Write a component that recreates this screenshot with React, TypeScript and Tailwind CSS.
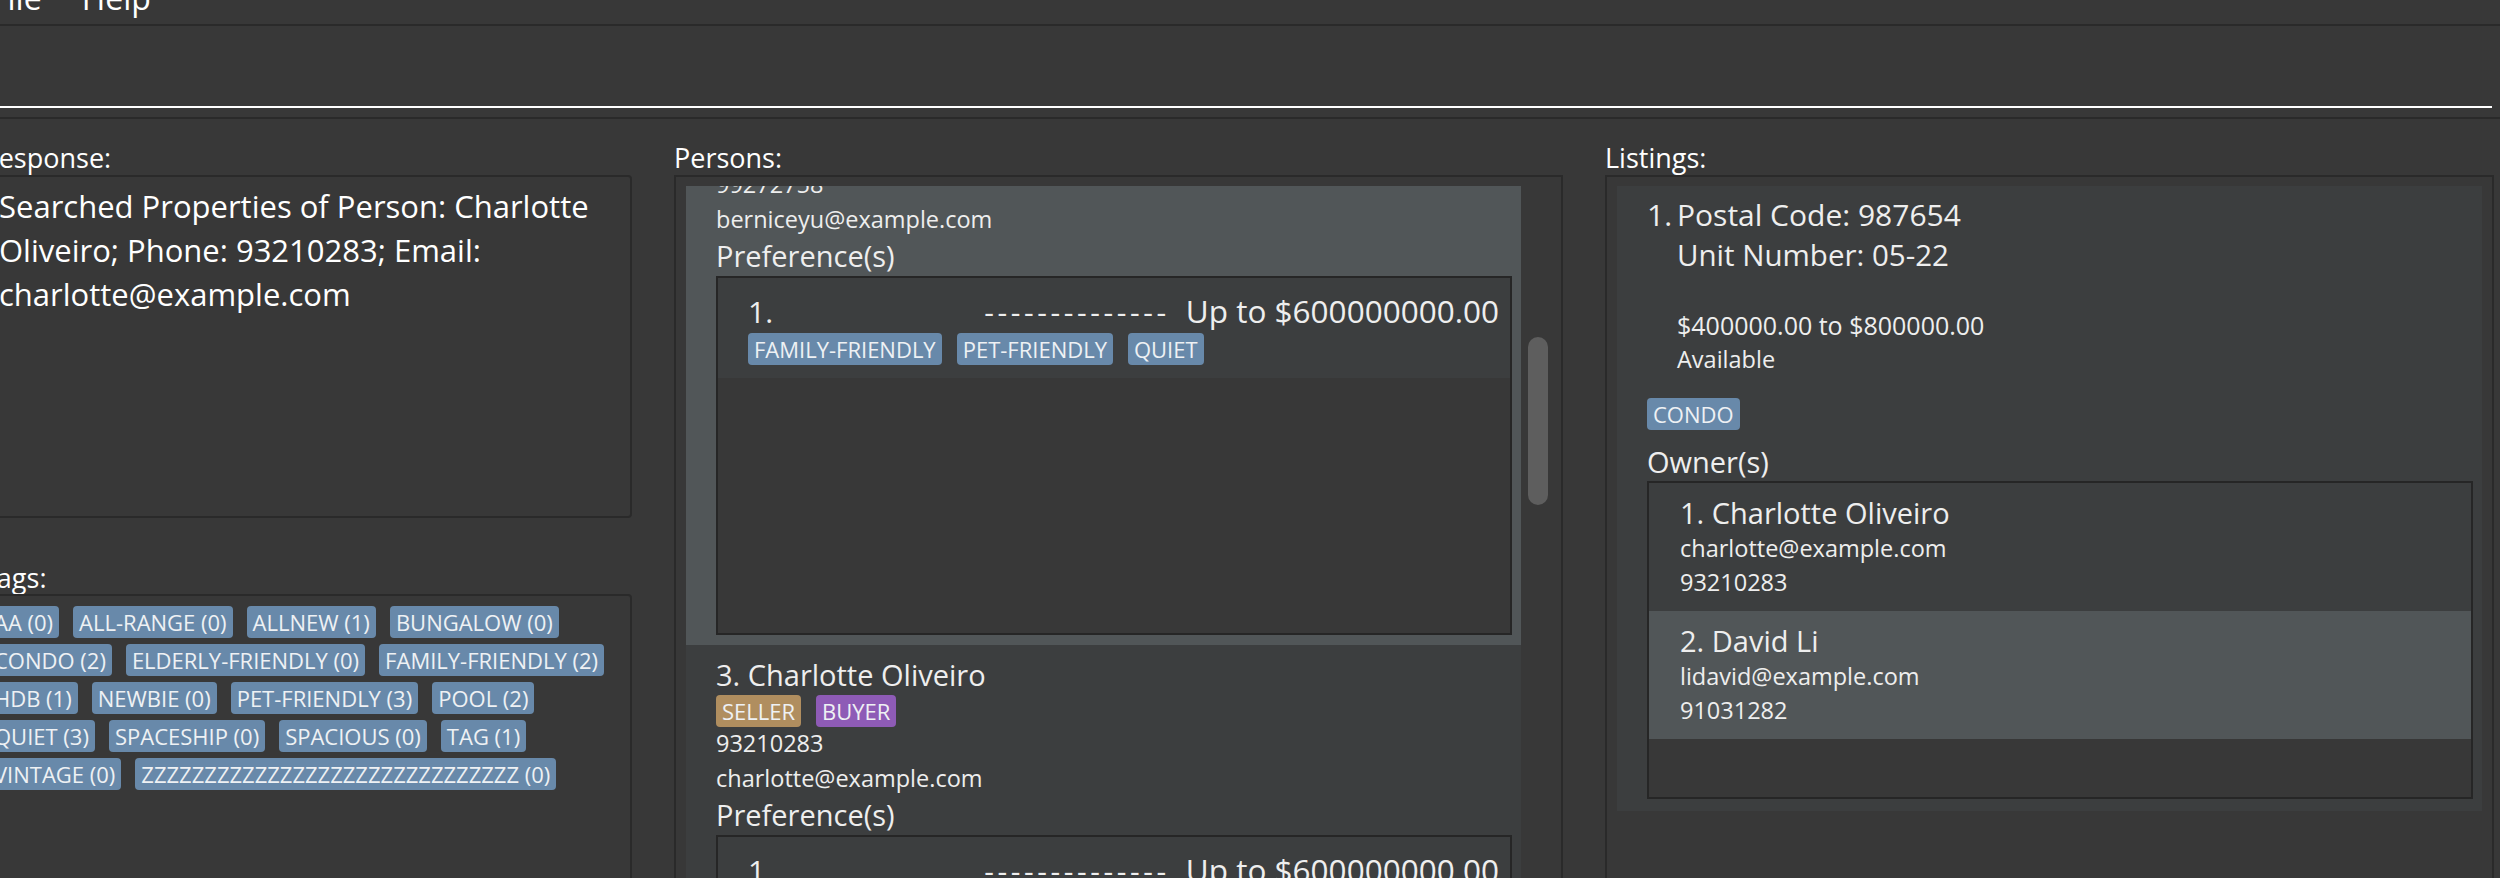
import React from 'react';

type Role = 'SELLER' | 'BUYER';

const tagsInUse = [
  'AA (0)',
  'ALL-RANGE (0)',
  'ALLNEW (1)',
  'BUNGALOW (0)',
  'CONDO (2)',
  'ELDERLY-FRIENDLY (0)',
  'FAMILY-FRIENDLY (2)',
  'HDB (1)',
  'NEWBIE (0)',
  'PET-FRIENDLY (3)',
  'POOL (2)',
  'QUIET (3)',
  'SPACESHIP (0)',
  'SPACIOUS (0)',
  'TAG (1)',
  'VINTAGE (0)',
  'ZZZZZZZZZZZZZZZZZZZZZZZZZZZZZZ (0)',
];

// list is scrolled: card 2 is only partly in view (from its phone line down)
const persons = [
  {
    index: 2,
    name: 'Bernice Yu',
    roles: ['BUYER'] as Role[],
    phone: '99272758',
    email: 'berniceyu@example.com',
    bg: 'bg-[#515658]',
    scrolledPast: true,
  },
  {
    index: 3,
    name: 'Charlotte Oliveiro',
    roles: ['SELLER', 'BUYER'] as Role[],
    phone: '93210283',
    email: 'charlotte@example.com',
    bg: 'bg-[#3c3e3f]',
    scrolledPast: false,
  },
];

const owners = [
  { name: 'Charlotte Oliveiro', email: 'charlotte@example.com', phone: '93210283', bg: 'bg-[#3c3e3f]' },
  { name: 'David Li', email: 'lidavid@example.com', phone: '91031282', bg: 'bg-[#515658]' },
];

function Tag({ label, color = 'bg-[#6889aa]' }: { label: string; color?: string }) {
  return (
    <span
      className={`${color} h-[32px] px-[6px] rounded-[4px] flex items-center text-[22px] leading-none text-[#eef1f4] whitespace-nowrap`}
    >
      {label}
    </span>
  );
}

function RoleTag({ role }: { role: Role }) {
  return role === 'SELLER' ? (
    <Tag label="SELLER" color="bg-[#b08e5f]" />
  ) : (
    <Tag label="BUYER" color="bg-[#8e5bb6]" />
  );
}

function PanelLabel({ children }: { children: React.ReactNode }) {
  return <div className="text-[27px] leading-[32px] text-white mb-[1px]">{children}</div>;
}

function PreferenceBox() {
  return (
    <div className="h-[359px] border-2 border-[#262626] bg-[#383838] mt-[2px]">
      <div className="bg-[#3c3e3f] pl-[30px] pr-[11px] pt-[13px] pb-[13px]">
        <div className="flex justify-between items-baseline text-[30px] leading-[40px]">
          <span>1.</span>
          <span className="flex items-baseline gap-[16px]">
            <span className="tracking-[3.6px]">--------------</span>
            <span className="text-[31.5px]">Up to $600000000.00</span>
          </span>
        </div>
        <div className="flex gap-[15px] mt-[1px]">
          <Tag label="FAMILY-FRIENDLY" />
          <Tag label="PET-FRIENDLY" />
          <Tag label="QUIET" />
        </div>
      </div>
    </div>
  );
}

function PersonCard({ p }: { p: (typeof persons)[number] }) {
  return (
    <div className={`${p.bg} pl-[30px] pr-[9px] ${p.scrolledPast ? 'pt-0' : 'pt-[12px]'} pb-[10px] text-[#eeeeee]`}>
      {!p.scrolledPast && (
        <>
          <div className="text-[29px] leading-[36px]">
            {p.index}. {p.name}
          </div>
          <div className="flex gap-[15px] mt-[2px]">
            {p.roles.map(r => (
              <RoleTag key={r} role={r} />
            ))}
          </div>
        </>
      )}
      <div className="text-[23.5px] leading-[32px]">{p.phone}</div>
      <div className="text-[23.5px] leading-[38px]">{p.email}</div>
      <div className="text-[29px] leading-[36px]">Preference(s)</div>
      <PreferenceBox />
    </div>
  );
}

function OwnerRow({ o, i }: { o: (typeof owners)[number]; i: number }) {
  return (
    <div className={`${o.bg} h-[128px] pl-[31px] pt-[12px]`}>
      <div className="text-[29px] leading-[36px]">
        {i}. {o.name}
      </div>
      <div className="text-[23.5px] leading-[34px]">{o.email}</div>
      <div className="text-[23.5px] leading-[34px]">{o.phone}</div>
    </div>
  );
}

export default function App() {
  return (
    <div className="w-[2500px] h-[878px] overflow-hidden bg-[#383838] text-white font-['Open_Sans',sans-serif]">
      {/* Menu bar */}
      <div className="h-[26px] border-b-2 border-[#2a2a2a] overflow-hidden">
        <div className="flex gap-[40px] -ml-[9px] -mt-[18px]">
          <span className="text-[32px] leading-[32px]">File</span>
          <span className="text-[32px] leading-[32px]">Help</span>
        </div>
      </div>

      {/* Command box */}
      <div className="h-[93px] border-b-2 border-[#2a2a2a] pr-[8px]">
        <div className="h-[82px] border-b-2 border-white" />
      </div>

      {/* Main panels */}
      <div className="flex gap-[42px] -ml-[18px] pt-[23px]">
        <div className="w-[650px] shrink-0 flex flex-col">
          <PanelLabel>Response:</PanelLabel>
          <div className="h-[343px] border-2 border-[#2a2a2a] rounded-[4px] pl-[15px] pr-[20px] pt-[7px] text-[31px] leading-[44px] text-white">
            Searched Properties of Person: Charlotte Oliveiro; Phone: 93210283; Email: charlotte@example.com
          </div>
          <div className="mt-[44px] text-[27px] leading-[32px] text-white">Tags:</div>
          <div className="h-[400px] border-2 border-[#2a2a2a] rounded-[4px] pl-[4px] pr-[2px] pt-[10px]">
            <div className="flex flex-wrap gap-x-[14px] gap-y-[6px]">
              {tagsInUse.map(t => (
                <Tag key={t} label={t} />
              ))}
            </div>
          </div>
        </div>

        <div className="w-[889px] shrink-0 flex flex-col">
          <PanelLabel>Persons:</PanelLabel>
          <div className="h-[720px] border-2 border-[#2a2a2a] flex">
            <div className="w-[835px] ml-[10px] mt-[9px] overflow-hidden">
              <div className="-mt-[18px]">
                {persons.map(p => (
                  <PersonCard key={p.index} p={p} />
                ))}
              </div>
            </div>
            <div className="ml-[7px] w-[20px]">
              <div className="mt-[160px] h-[168px] w-[20px] rounded-full bg-[#5e5e5e]" />
            </div>
          </div>
        </div>

        <div className="w-[889px] shrink-0 flex flex-col">
          <PanelLabel>Listings:</PanelLabel>
          <div className="h-[720px] border-2 border-[#2a2a2a] pl-[10px] pr-[10px] pt-[9px]">
            <div className="bg-[#3c3e3f] pl-[30px] pr-[9px] pt-[11px] pb-[12px] text-[#eeeeee]">
              <div className="flex">
                <span className="text-[30px] leading-[36px] w-[30px]">1.</span>
                <div className="flex flex-col">
                  <span className="text-[30px] leading-[36px]">Postal Code: 987654</span>
                  <span className="text-[29.5px] leading-[36px] mt-[4px]">Unit Number: 05-22</span>
                  <span className="text-[25px] leading-[34px] mt-[35px]">$400000.00 to $800000.00</span>
                  <span className="text-[23.5px] leading-[34px]">Available</span>
                </div>
              </div>
              <div className="flex mt-[22px]">
                <Tag label="CONDO" />
              </div>
              <div className="text-[29px] leading-[36px] mt-[14px]">Owner(s)</div>
              <div className="h-[318px] border-2 border-[#262626] bg-[#383838] mt-[1px]">
                {owners.map((o, i) => (
                  <OwnerRow key={o.name} o={o} i={i + 1} />
                ))}
              </div>
            </div>
          </div>
        </div>
      </div>
    </div>
  );
}
